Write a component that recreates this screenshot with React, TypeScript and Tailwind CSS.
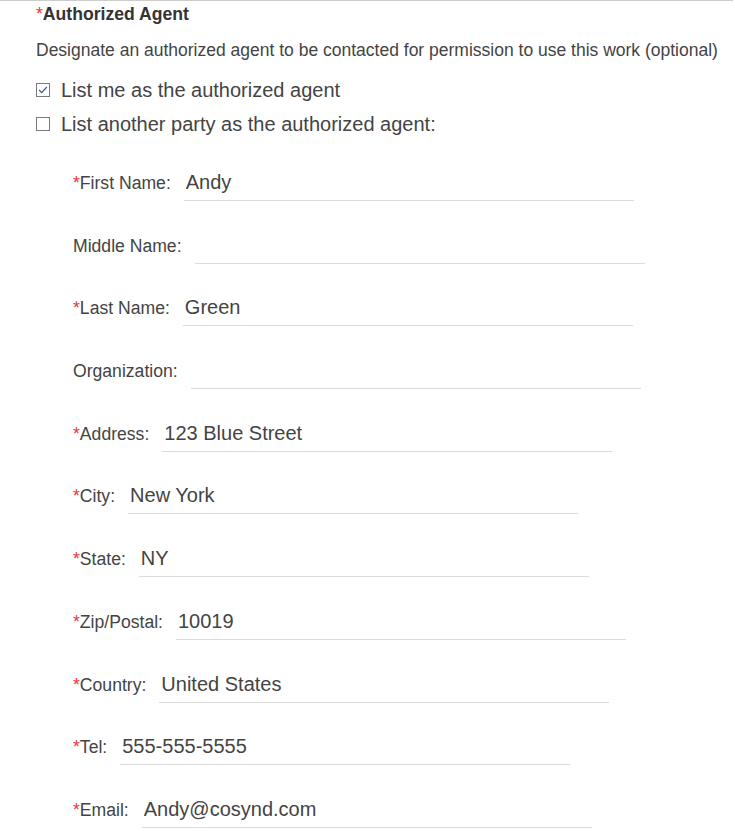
import { useState } from 'react'

type Field = { label: string; required: boolean; value: string }

const fields: Field[] = [
  { label: 'First Name', required: true, value: 'Andy' },
  { label: 'Middle Name', required: false, value: '' },
  { label: 'Last Name', required: true, value: 'Green' },
  { label: 'Organization', required: false, value: '' },
  { label: 'Address', required: true, value: '123 Blue Street' },
  { label: 'City', required: true, value: 'New York' },
  { label: 'State', required: true, value: 'NY' },
  { label: 'Zip/Postal', required: true, value: '10019' },
  { label: 'Country', required: true, value: 'United States' },
  { label: 'Tel', required: true, value: '555-555-5555' },
  { label: 'Email', required: true, value: 'Andy@cosynd.com' },
]

function Checkbox({ checked, onClick }: { checked: boolean; onClick: () => void }) {
  return (
    <button
      type="button"
      onClick={onClick}
      className="flex h-[14px] w-[14px] shrink-0 items-center justify-center border border-[#7a7a7a] bg-white"
    >
      {checked && (
        <svg viewBox="0 0 14 14" className="h-[12px] w-[12px]">
          <path d="M2.5 7 L5.5 10 L11.5 3.5" fill="none" stroke="#3a5a9a" strokeWidth="1.4" />
        </svg>
      )}
    </button>
  )
}

export default function App() {
  const [self, setSelf] = useState(true)
  const [other, setOther] = useState(false)
  const [values, setValues] = useState(fields.map(f => f.value))

  return (
    <div className="w-[733px] border-t border-[#cdcdcd] bg-white font-['Liberation_Sans',Arial,sans-serif] text-[#444]">
      <div className="pl-[36px]">
        <div className="pt-[3px] text-[17.6px] font-bold leading-[20px] text-[#333]">
          <span className="font-normal text-[#e8393b]">*</span>Authorized Agent
        </div>
        <p className="mt-[16px] text-[17.5px] leading-[20px]">
          Designate an authorized agent to be contacted for permission to use this work (optional)
        </p>
        <div className="mt-[18px] flex h-[24px] items-center gap-[11px] text-[20px] leading-[24px]">
          <Checkbox checked={self} onClick={() => setSelf(!self)} />
          <span>List me as the authorized agent</span>
        </div>
        <div className="mt-[10px] flex h-[24px] items-center gap-[11px] text-[20px] leading-[24px]">
          <Checkbox checked={other} onClick={() => setOther(!other)} />
          <span>List another party as the authorized agent:</span>
        </div>
      </div>

      <div className="mt-[29px] flex flex-col gap-[26.7px] pl-[73px]">
        {fields.map((f, i) => (
          <div key={f.label} className="flex h-[36px] items-center gap-[13px]">
            <label className="text-[17.6px] leading-[20px]">
              {f.required && <span className="text-[#e8393b]">*</span>}
              {f.label}:
            </label>
            <input
              value={values[i]}
              onChange={e => {
                const next = [...values]
                next[i] = e.target.value
                setValues(next)
              }}
              className="h-[36px] w-[450px] border-b border-[#dcdcdc] bg-transparent pl-[2px] text-[20px] text-[#444] outline-none"
            />
          </div>
        ))}
      </div>
    </div>
  )
}
